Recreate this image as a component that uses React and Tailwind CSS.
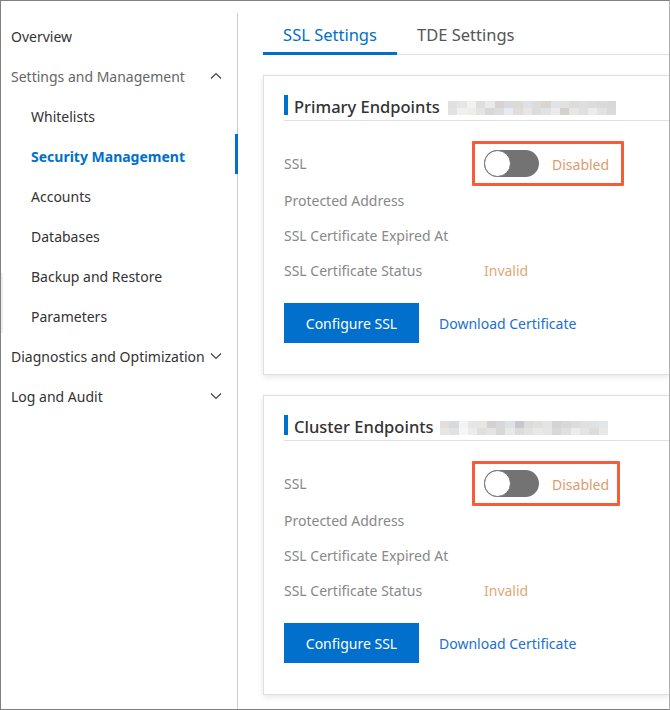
import React from "react";

const font = { fontFamily: '"Noto Sans", "Open Sans", sans-serif' };

// mosaic cell colours for the blurred out instance ids
const MOSAIC_A = [
  ["#e0e0e0", "#e6e6e6", "#f2f2f2", "#dedede", "#e8eaec", "#d8d2d2", "#d9dadc", "#dcdad6", "#dfe2e5", "#dcdcdc", "#d8d4d0", "#e0e2e5", "#e4e2e0", "#dcdcdc", "#e0dede", "#dcdcdc", "#dadada", "#d8d8d8"],
  ["#e2e2e2", "#f0f0f0", "#f0ece6", "#e4e4e6", "#d8d8d8", "#dcdcdc", "#e6eaee", "#e0dcd8", "#e8e6e4", "#dcdcdc", "#dfe3e8", "#ebebeb", "#d4d0cc", "#e6e6e6", "#e0e0e0", "#ececec", "#e2e2e2", "#dadada"],
];
const MOSAIC_B = [
  ["#e2dedc", "#d8dadc", "#f4f4f4", "#e4e6e8", "#e8e6e2", "#d4d2d0", "#d8d8da", "#dfe2e4", "#c8c8ca", "#dcdcdc", "#e2e0de", "#e4e4e4", "#d4d4d4", "#d8d8d8", "#dcdcdc", "#e0e0e0", "#dfe2e5", "#e4e6e8"],
  ["#e8e6e4", "#e0e2e4", "#f6f6f6", "#ececec", "#e0e0dc", "#e4e4e4", "#d8d8d8", "#e8e8e8", "#dcdcdc", "#e2e2de", "#e8e8e8", "#e6e6e6", "#d8d8d8", "#e0e0e0", "#ececec", "#e4e4e4", "#dcdcdc", "#e8e8e8"],
];

function Mosaic({ cells, className = "" }) {
  return (
    <svg width="168" height="14" viewBox="0 0 168 14" className={className} shapeRendering="crispEdges">
      {cells.map((row, y) =>
        row.map((c, x) => (
          <rect key={`${y}-${x}`} x={x * 9.34} y={y * 7} width="9.34" height="7" fill={c} />
        ))
      )}
    </svg>
  );
}

function Chevron({ up }) {
  return (
    <svg width="12" height="8" viewBox="0 0 12 8" fill="none" stroke="#444" strokeWidth="1.2" className="absolute right-[15px] top-1/2 -translate-y-1/2">
      <path d={up ? "M1 6.5 L6 1.5 L11 6.5" : "M1 1.5 L6 6.5 L11 1.5"} />
    </svg>
  );
}

function NavItem({ label, sub, active, chevron, muted }) {
  return (
    <div
      className={`relative flex h-10 items-center text-[14px] whitespace-nowrap ${sub ? "pl-[30px]" : "pl-[10px]"} ${
        active ? "font-bold text-[#0070cc]" : muted ? "text-[#666666]" : "text-[#333333]"
      }`}
    >
      {label}
      {chevron && <Chevron up={chevron === "up"} />}
      {active && <span className="absolute top-[-2px] right-[-1px] h-10 w-[3px] bg-[#0070cc]" />}
    </div>
  );
}

function Row({ label, children }) {
  return (
    <div className="flex h-[35px] items-center text-[14px] text-[#888888]">
      <div className="w-[200px] shrink-0">{label}</div>
      {children}
    </div>
  );
}

function EndpointCard({ title, cells, boxWidth, mosaicGap }) {
  return (
    <section className="h-[300px] border border-r-0 border-[#e0e0e0] bg-white pt-[19px] pl-5 shadow-[0_2px_6px_rgba(0,0,0,0.1)]">
      <div className="flex h-[26px] items-start border-b border-[#e0e0e0] pb-[5px]">
        <span className="h-5 w-1 bg-[#0070cc]" />
        <h2 className="ml-[6px] pt-[2px] text-[16.5px] leading-5 font-medium text-[#333333]">{title}</h2>
        <Mosaic cells={cells} className={`mt-[6px] ${mosaicGap}`} />
      </div>

      <div className="relative mt-[29px] flex h-[27px] items-center text-[14px]">
        <div className="w-[200px] shrink-0 text-[#888888]">SSL</div>
        <span className="relative block h-[27px] w-[55px] rounded-full bg-[#737373]">
          <span className="absolute top-0 left-0 h-[27px] w-[27px] rounded-full border border-[#737373] bg-white" />
        </span>
        <span className="ml-[13px] pt-[1px] text-[#e09a6e]">Disabled</span>
        <span className={`absolute top-[-9px] left-[188px] h-[45px] rounded-[1px] border-[3px] border-[#f45c3a] ${boxWidth}`} />
      </div>

      <div className="mt-[6px]">
        <Row label="Protected Address" />
        <Row label="SSL Certificate Expired At" />
        <Row label="SSL Certificate Status">
          <span className="text-[#e0a878]">Invalid</span>
        </Row>
      </div>

      <div className="mt-[15px] flex items-center">
        <button className="h-10 w-[135px] bg-[#0070cc] text-[14px] text-white">Configure SSL</button>
        <a className="ml-5 text-[14px] text-[#1b6fd0]">Download Certificate</a>
      </div>
    </section>
  );
}

export default function App() {
  return (
    <div style={font} className="relative flex h-[710px] w-[670px] overflow-hidden border border-[#808080] border-r-[#b0b0b0] bg-white">
      <span className="absolute top-[272px] left-0 h-[60px] w-[2px] bg-[#eeeeee]" />

      {/* side nav */}
      <aside className="mt-3 w-[237px] shrink-0 border-r border-[#cccccc] pt-[3px]">
        <NavItem label="Overview" />
        <NavItem label="Settings and Management" chevron="up" muted />
        <NavItem label="Whitelists" sub />
        <NavItem label="Security Management" sub active />
        <NavItem label="Accounts" sub />
        <NavItem label="Databases" sub />
        <NavItem label="Backup and Restore" sub />
        <NavItem label="Parameters" sub />
        <NavItem label="Diagnostics and Optimization" chevron="down" />
        <NavItem label="Log and Audit" chevron="down" />
      </aside>

      {/* content */}
      <main className="min-w-0 flex-1 pl-[25px]">
        <div className="mt-[13px] flex h-[41px] border-b border-[#e0e0e0] text-[16.5px]">
          <div className="h-[41px] w-[134px] border-b-[3px] border-[#0070cc] pt-[9px] text-center text-[#0070cc]">SSL Settings</div>
          <div className="pt-[9px] pl-5 text-[#555555]">TDE Settings</div>
        </div>
        <div className="mt-5 flex flex-col gap-5">
          <EndpointCard title="Primary Endpoints" cells={MOSAIC_A} boxWidth="w-[152px]" mosaicGap="ml-2" />
          <EndpointCard title="Cluster Endpoints" cells={MOSAIC_B} boxWidth="w-[148px]" mosaicGap="ml-[6px]" />
        </div>
      </main>
    </div>
  );
}
